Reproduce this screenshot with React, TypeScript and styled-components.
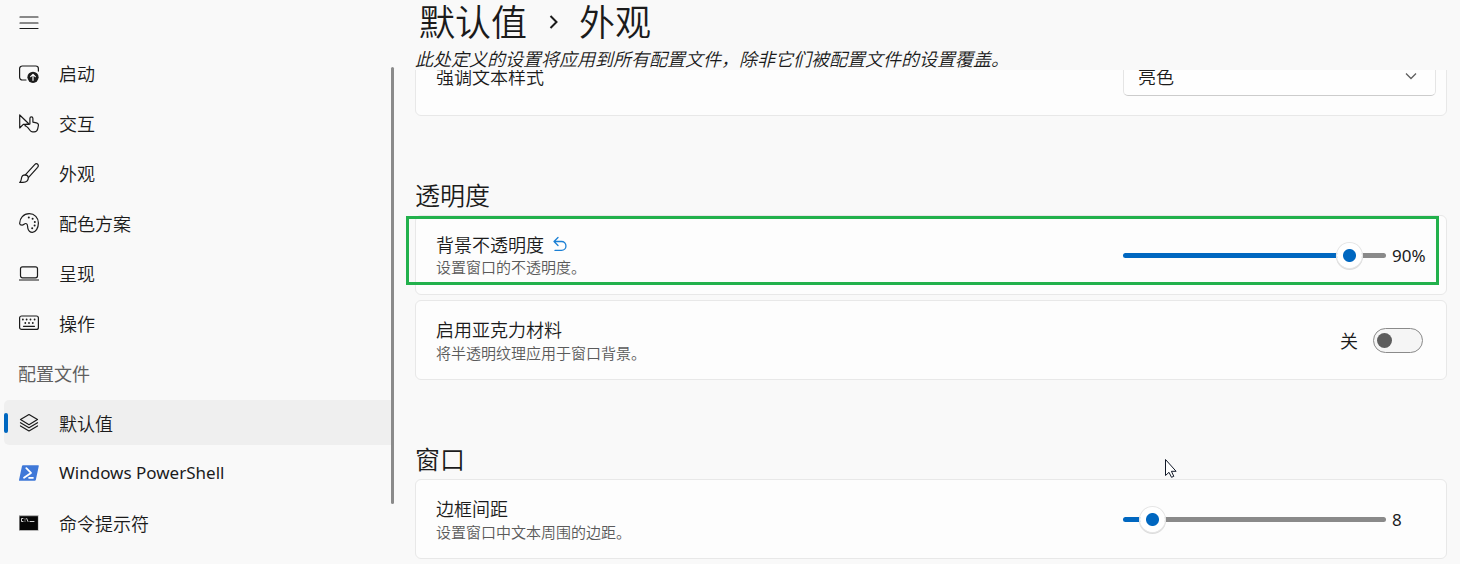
import React, { useState } from "react";
import styled, { createGlobalStyle } from "styled-components";

const GlobalStyle = createGlobalStyle`
  *, *::before, *::after { box-sizing: border-box; }
  html, body { margin: 0; background: #f9f9f9; }
  body, button, select, input {
    font-family: "Noto Sans CJK SC", "Noto Sans", sans-serif;
    color: #1b1b1b;
  }
`;

const Page = styled.div`
  position: relative;
  display: flex;
  height: 100vh;
  overflow: hidden;
  font-size: 18px;
  font-weight: 350;
`;

const Sidebar = styled.aside`
  position: relative;
  flex: 0 0 393px;
  display: flex;
  flex-direction: column;
  padding-left: 4px;
`;

const MenuButton = styled.button`
  display: flex;
  align-items: center;
  width: 50px;
  height: 46px;
  padding: 0 15px;
  margin-bottom: 4px;
  border: 0;
  background: none;
`;

const NavList = styled.ul`
  display: flex;
  flex-direction: column;
  gap: 5px;
  margin: 0;
  padding: 0;
  list-style: none;
`;

const NavLink = styled.a<{ $active?: boolean }>`
  position: relative;
  display: flex;
  align-items: center;
  gap: 20px;
  height: 45px;
  padding-left: 15px;
  border-radius: 5px 0 0 5px;
  color: #1b1b1b;
  line-height: 24px;
  text-decoration: none;
  background: ${(p) => (p.$active ? "#efefef" : "transparent")};

  &::before {
    content: "";
    display: ${(p) => (p.$active ? "block" : "none")};
    position: absolute;
    left: 0;
    width: 4px;
    height: 20px;
    border-radius: 2px;
    background: #0067c0;
  }
`;

const LatinLabel = styled.span`
  font-size: 17px;
  font-weight: 400;
  font-family: "Noto Sans", sans-serif;
`;

const NavHeading = styled.li`
  height: 45px;
  padding-left: 14px;
  line-height: 46px;
  color: #5f5f5f;
  font-weight: 400;
`;

const ScrollThumb = styled.div`
  position: absolute;
  top: 67px;
  right: -1px;
  width: 3px;
  height: 437px;
  border-radius: 2px;
  background: #8b8b8b;
`;

const Main = styled.main`
  flex: 1;
  min-width: 0;
  display: flex;
  flex-direction: column;
`;

const Header = styled.header`
  height: 70px;
  flex: none;
  padding-left: 22px;
`;

const Breadcrumb = styled.h1`
  display: flex;
  align-items: center;
  gap: 21px;
  margin: 0;
  padding-left: 4px;
  font-size: 36px;
  line-height: 40px;
  font-weight: 350;

  svg { margin-top: 4px; }
`;

const Intro = styled.p`
  margin: 5px 0 0;
  font-size: 18px;
  line-height: 26px;
  font-style: italic;
  white-space: nowrap;
`;

const Scroller = styled.div`
  flex: 1;
  min-height: 0;
  overflow: hidden;
  padding: 0 13px 0 22px;
`;

const Content = styled.div`
  margin-top: -34px;
`;

const Group = styled.section`
  margin-top: 62px;
`;

const GroupTitle = styled.h2`
  margin: 0 0 5px;
  font-size: 25px;
  line-height: 32px;
  font-weight: 350;
`;

const Card = styled.div`
  position: relative;
  display: flex;
  align-items: center;
  justify-content: space-between;
  height: 80px;
  padding: 0 10px 0 20px;
  border: 1px solid #e8e8e8;
  border-radius: 6px;
  background: #fdfdfd;

  & + & { margin-top: 5px; }
`;

const CardText = styled.div`
  min-width: 0;
`;

const CardLabel = styled.label`
  font-size: 18px;
  line-height: 24px;
`;

const LabelRow = styled.div`
  display: flex;
  align-items: center;
  gap: 8px;
`;

const ResetButton = styled.button`
  display: flex;
  padding: 0;
  border: 0;
  background: none;
`;

const Description = styled.p`
  margin: 0;
  font-size: 15px;
  line-height: 22px;
  color: #5a5a5a;
`;

const SelectWrap = styled.div`
  position: relative;
  width: 313px;
  display: flex;
  align-items: center;

  svg {
    position: absolute;
    right: 18px;
    pointer-events: none;
  }
`;

const Select = styled.select`
  appearance: none;
  width: 100%;
  height: 40px;
  padding: 0 14px;
  border: 1px solid #e5e5e5;
  border-bottom-color: #cccccc;
  border-radius: 5px;
  background: #fefefe;
  font-size: 18px;
  font-weight: 350;
`;

const SliderControl = styled.div`
  display: flex;
  align-items: center;
  gap: 6px;
  width: 313px;
`;

const Range = styled.input`
  appearance: none;
  flex: none;
  width: 263px;
  height: 28px;
  margin: 0;
  background: none;

  &::-webkit-slider-runnable-track {
    height: 5px;
    border-radius: 3px;
    background: linear-gradient(to right, #0067c0 var(--fill), #8a8a8a var(--fill));
  }
  &::-webkit-slider-thumb {
    appearance: none;
    width: 25px;
    height: 25px;
    margin-top: -10px;
    border-radius: 50%;
    background: radial-gradient(circle, #0067c0 6px, #ffffff 7px);
    box-shadow: 0 0 0 1px #e6e6e6, 0 1px 0 1px #dcdcdc;
  }
`;

const SliderValue = styled.output`
  font-family: "Noto Sans", sans-serif;
  font-size: 17px;
  line-height: 24px;
  font-weight: 400;
  margin-top: 2px;
`;

const SwitchControl = styled.label`
  display: flex;
  align-items: center;
  gap: 15px;
  padding-right: 13px;
`;

const Switch = styled.input`
  appearance: none;
  position: relative;
  width: 50px;
  height: 25px;
  margin: 0;
  border: 1px solid #8a8a8a;
  border-radius: 13px;
  background: #f5f5f5;

  &::before {
    content: "";
    position: absolute;
    top: 4px;
    left: 3px;
    width: 15px;
    height: 15px;
    border-radius: 50%;
    background: #5d5d5d;
  }
  &:checked { background: #0067c0; border-color: #0067c0; }
  &:checked::before { left: 30px; background: #ffffff; }
`;

const Highlight = styled.div`
  position: absolute;
  inset: 0 7px 9px -10px;
  border: 3px solid #22b14c;
  pointer-events: none;
`;

const Pointer = styled.svg`
  position: absolute;
  top: 458px;
  right: 282px;
  pointer-events: none;
`;

const LineIcon = styled.svg.attrs({
  width: 20,
  height: 20,
  viewBox: "0 0 20 20",
  fill: "none",
  stroke: "#1b1b1b",
  strokeWidth: 1.2,
  strokeLinecap: "round",
  strokeLinejoin: "round",
  "aria-hidden": true,
})`
  flex: none;
`;

const StartupIcon = () => (
  <LineIcon>
    <path d="M7 17H3.3A2.7 2.7 0 0 1 .6 14.300V5.700A2.700 2.700 0 0 1 3.300 3h13.400a2.700 2.700 0 0 1 2.700 2.700v2.400" />
    <circle cx="14" cy="14.300" r="5.600" fill="#1b1b1b" stroke="none" />
    <path d="M14 17.300v-5.800M11.700 13.600l2.300-2.300 2.300 2.300" stroke="#fff" />
  </LineIcon>
);

const InteractionIcon = () => (
  <LineIcon>
    <path d="M.7 2v13l3.600-3.700h6z" />
    <path d="M10.900 11V5.400a1.500 1.500 0 0 1 3 0v3.700l3.500.8c1.300.3 2.200 1.400 2 2.600l-.7 3.300c-.4 1.700-1.800 3-3.500 3h-1.600c-1 0-1.900-.5-2.500-1.300l-2-2.700c-.8-1-1.900-1.700-3.200-2.100.6-1 1.400-1.500 2.300-1.600" />
  </LineIcon>
);

const BrushIcon = () => (
  <LineIcon>
    <path d="M6.300 11.800 15.700 1.600c1-1 2.200-1 3-.3.800.800.800 1.900-.1 3L9.400 14.600" />
    <path d="M6.300 11.800c1.700.2 2.900 1.200 3.100 2.800-.1 2.900-2.300 4.800-5.400 4.800H.7c1.500-1 1.500-2.200 1.700-3.800.2-2.200 1.700-3.800 3.900-3.800z" />
  </LineIcon>
);

const PaletteIcon = () => (
  <LineIcon>
    <path d="M.7 10.800C.4 5.200 4.700.7 10.200.7c5.300 0 9.200 4 9.200 9.400 0 5.300-2.800 9.200-6 9.200-2.300 0-4-1.500-4.600-4.200-.4-2 .3-4.200-1.800-4.600-1.600-.3-2.200 1.700-4 1.600-1.200 0-2.200-.4-2.300-1.300z" />
    <g fill="#1b1b1b" stroke="none">
      <circle cx="9.800" cy="4.500" r="1" />
      <circle cx="13.600" cy="5.800" r="1" />
      <circle cx="15.800" cy="9" r="1" />
      <circle cx="15.600" cy="12.400" r="1" />
      <circle cx="13.200" cy="15.200" r="1" />
    </g>
  </LineIcon>
);

const LaptopIcon = () => (
  <LineIcon>
    <rect x="1.500" y="3.800" width="17" height="11" rx="2" />
    <path d="M.5 17h19" />
  </LineIcon>
);

const KeyboardIcon = () => (
  <LineIcon>
    <rect x=".6" y="3" width="18.800" height="13.400" rx="2" />
    <g fill="#1b1b1b" stroke="none">
      <circle cx="3.900" cy="6.500" r=".9" />
      <circle cx="7.600" cy="6.500" r=".9" />
      <circle cx="11.500" cy="6.500" r=".9" />
      <circle cx="15.600" cy="6.500" r=".9" />
      <circle cx="6.300" cy="10" r=".9" />
      <circle cx="10" cy="10" r=".9" />
      <circle cx="13.800" cy="10" r=".9" />
    </g>
    <path d="M4.500 13.300h11" />
  </LineIcon>
);

const LayersIcon = () => (
  <LineIcon>
    <path d="M10 1.500 18.500 6.600 10 11.700 1.500 6.600z" />
    <path d="M1.500 9.700 10 14.800l8.500-5.100" />
    <path d="M1.500 12.900 10 18l8.500-5.100" />
  </LineIcon>
);

const PowerShellIcon = () => (
  <LineIcon>
    <path d="M4 2.300h15.200q.8 0 .6.800l-3 13.800q-.2.800-1 .8H.6q-.8 0-.6-.8L3 3.100q.2-.8 1-.8z" fill="#3f78d8" stroke="none" />
    <path d="M7.300 5.200l4.700 4.700-7 4.800" stroke="#fff" strokeWidth="1.800" />
    <path d="M10 14.900h4" stroke="#fff" strokeWidth="1.600" />
  </LineIcon>
);

const TerminalIcon = () => (
  <LineIcon>
    <rect x="0" y="2" width="19.500" height="16" fill="#b4b4b4" stroke="none" />
    <rect x=".6" y="3.200" width="18.300" height="13.800" fill="#060606" stroke="none" />
    <path d="M4 5.500H2.500v3H4M6 6v.2M6 8v.2M7.700 5.500l1.300 3M11 8.500h4" stroke="#e8e8e8" strokeWidth=".9" />
  </LineIcon>
);

const navItems = [
  { label: "启动", icon: <StartupIcon /> },
  { label: "交互", icon: <InteractionIcon /> },
  { label: "外观", icon: <BrushIcon /> },
  { label: "配色方案", icon: <PaletteIcon /> },
  { label: "呈现", icon: <LaptopIcon /> },
  { label: "操作", icon: <KeyboardIcon /> },
];

const profileItems = [
  { label: "默认值", icon: <LayersIcon />, active: true },
  { label: "Windows PowerShell", icon: <PowerShellIcon />, latin: true },
  { label: "命令提示符", icon: <TerminalIcon /> },
];

interface SliderProps {
  id: string;
  initial: number;
  max: number;
  unit?: string;
}

function Slider({ id, initial, max, unit = "" }: SliderProps) {
  const [value, setValue] = useState(initial);
  const fill = `${(value / max) * 100}%`;
  return (
    <SliderControl>
      <Range
        id={id}
        type="range"
        min={0}
        max={max}
        value={value}
        onChange={(e) => setValue(Number(e.target.value))}
        style={{ "--fill": fill } as React.CSSProperties}
      />
      <SliderValue htmlFor={id}>
        {value}
        {unit}
      </SliderValue>
    </SliderControl>
  );
}

export default function App() {
  const [acrylic, setAcrylic] = useState(false);
  return (
    <>
      <GlobalStyle />
      <Page>
        <Sidebar>
          <MenuButton aria-label="菜单">
            <LineIcon>
              <path d="M1 4h18M1 10h18M1 15.500h18" />
            </LineIcon>
          </MenuButton>
          <nav>
            <NavList>
              {navItems.map((item) => (
                <li key={item.label}>
                  <NavLink href="#">
                    {item.icon}
                    {item.label}
                  </NavLink>
                </li>
              ))}
              <NavHeading>配置文件</NavHeading>
              {profileItems.map((item) => (
                <li key={item.label}>
                  <NavLink href="#" $active={item.active}>
                    {item.icon}
                    {item.latin ? <LatinLabel>{item.label}</LatinLabel> : item.label}
                  </NavLink>
                </li>
              ))}
            </NavList>
          </nav>
          <ScrollThumb />
        </Sidebar>

        <Main>
          <Header>
            <Breadcrumb>
              <span>默认值</span>
              <svg width="10" height="16" viewBox="0 0 10 16" fill="none" stroke="#1b1b1b" strokeWidth="2" aria-hidden="true">
                <path d="M2.500 2l6 6-6 6" />
              </svg>
              <span>外观</span>
            </Breadcrumb>
            <Intro>此处定义的设置将应用到所有配置文件，除非它们被配置文件的设置覆盖。</Intro>
          </Header>

          <Scroller>
            <Content>
              <Card>
                <CardText>
                  <CardLabel htmlFor="intense">强调文本样式</CardLabel>
                </CardText>
                <SelectWrap>
                  <Select id="intense" defaultValue="bright">
                    <option value="bright">亮色</option>
                  </Select>
                  <svg width="14" height="10" viewBox="0 0 14 10" fill="none" stroke="#5f5f5f" strokeWidth="1.300" aria-hidden="true">
                    <path d="M2 2.500l5 5 5-5" />
                  </svg>
                </SelectWrap>
              </Card>

              <Group>
                <GroupTitle>透明度</GroupTitle>
                <Card>
                  <CardText>
                    <LabelRow>
                      <CardLabel htmlFor="opacity">背景不透明度</CardLabel>
                      <ResetButton aria-label="重置">
                        <svg width="16" height="16" viewBox="0 0 16 16" fill="none" stroke="#1a7fd4" strokeWidth="1.300" strokeLinecap="round" strokeLinejoin="round" aria-hidden="true">
                          <path d="M6 1.500 2 5.500l4 4M2 5.500h7.500a4.400 4.400 0 0 1 0 8.900H3" />
                        </svg>
                      </ResetButton>
                    </LabelRow>
                    <Description>设置窗口的不透明度。</Description>
                  </CardText>
                  <Slider id="opacity" initial={90} max={100} unit="%" />
                  <Highlight />
                </Card>
                <Card>
                  <CardText>
                    <CardLabel htmlFor="acrylic">启用亚克力材料</CardLabel>
                    <Description>将半透明纹理应用于窗口背景。</Description>
                  </CardText>
                  <SwitchControl>
                    {acrylic ? "开" : "关"}
                    <Switch
                      id="acrylic"
                      type="checkbox"
                      role="switch"
                      checked={acrylic}
                      onChange={(e) => setAcrylic(e.target.checked)}
                    />
                  </SwitchControl>
                </Card>
              </Group>

              <Group>
                <GroupTitle>窗口</GroupTitle>
                <Card>
                  <CardText>
                    <CardLabel htmlFor="padding">边框间距</CardLabel>
                    <Description>设置窗口中文本周围的边距。</Description>
                  </CardText>
                  <Slider id="padding" initial={8} max={110} />
                </Card>
              </Group>
            </Content>
          </Scroller>
        </Main>

        <Pointer width="14" height="21" viewBox="0 0 14 21" fill="#fff" stroke="#111827" strokeWidth="1" aria-hidden="true">
          <path d="M1.500 1.500v16l3.500-3.200 2.500 5 2.300-1-2.400-5h4.700z" />
        </Pointer>
      </Page>
    </>
  );
}
